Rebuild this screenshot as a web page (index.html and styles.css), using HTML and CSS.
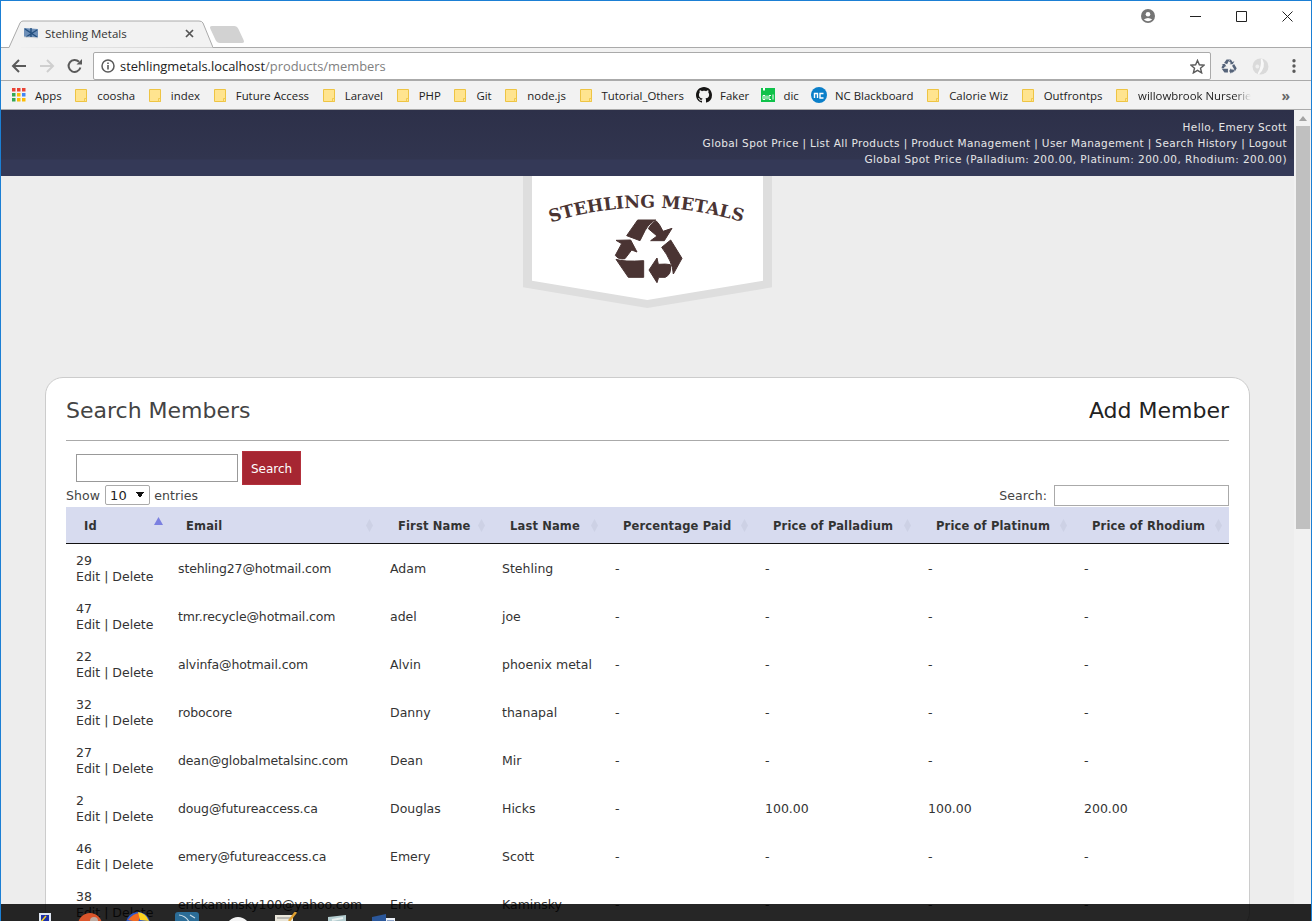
FILE: index.html
```html
<!DOCTYPE html>
<html lang="en">
<head>
    <meta charset="UTF-8">
    <title>Stehling Metals</title>
    <link rel="stylesheet" href="styles.css">
</head>
<body>
    <svg class="defs" width="0" height="0">
        <symbol id="folder" viewBox="0 0 12 13">
            <path d="M.5.5h11v12H.5z" fill="#ffe48f" stroke="#eec443"/>
            <path d="M9.5 9.500h2v3h-2z" fill="#ffe48f" stroke="#eec443" stroke-width=".8"/>
        </symbol>
        <symbol id="recycle" viewBox="310 145 210 195">
            <path d="M350 197L383 150H437Q420 156 405 182L390 212Z"/>
            <path d="M415 176Q425 157 438 152Q448 160 459 184L486 175L463 212H422L441 198Z"/>
            <path d="M482 210L516 265L490 312Q488 275 455 232Z"/>
            <path d="M441 264L417 300L441 338L446 322H466Q486 312 481 284Q470 281 445 283Z"/>
            <path d="M318 268Q342 276 401 272V322H355Z"/>
            <path d="M318 211L362 210L381 246L365 240L345 266Q325 270 316 256L335 221Z"/>
        </symbol>
    </svg>

    <div class="window">
        <!-- Barra de abas -->
        <div class="tabstrip">
            <div class="tab">
                <svg class="tab-shape" viewBox="0 0 206 28" width="206" height="28">
                    <path d="M0 28L2 27.500L13 3Q14 1 16 1H192Q195 1 196 3L206 27.500" fill="#f2f2f2" stroke="#aaa"/>
                </svg>
                <svg class="favicon" viewBox="0 0 14 12" width="14" height="12">
                    <path d="M0 1L14 2V11L0 10Z" fill="#6d8fb8"/>
                    <path d="M1 2L13 10M13 3L2 10M7 1V11" stroke="#24507f" stroke-width="1.400"/>
                    <path d="M0 10L14 11" stroke="#dcdcdc"/>
                </svg>
                <span class="tab-title">Stehling Metals</span>
                <svg class="tab-close" viewBox="0 0 9 9" width="9" height="9">
                    <path d="M1 1L8 8M8 1L1 8" stroke="#555" stroke-width="1.700"/>
                </svg>
            </div>
            <div class="newtab"></div>
            <div class="win-controls">
                <svg class="profile" viewBox="0 0 14 14" width="14" height="14">
                    <circle cx="7" cy="7" r="7" fill="#757575"/>
                    <circle cx="7" cy="5.200" r="2.300" fill="#fff"/>
                    <path d="M2.800 10.600Q7 7.400 11.200 10.600Q7 13.800 2.800 10.600Z" fill="#fff"/>
                </svg>
                <span class="win-btn"><svg viewBox="0 0 11 11" width="11" height="11"><path d="M0 5.500H11" stroke="#222"/></svg></span>
                <span class="win-btn"><svg viewBox="0 0 11 11" width="11" height="11"><path d="M.5.500h10v10H.5z" fill="none" stroke="#222"/></svg></span>
                <span class="win-btn"><svg viewBox="0 0 11 11" width="11" height="11"><path d="M.5.500L10.500 10.500M10.500.500L.5 10.500" stroke="#222"/></svg></span>
            </div>
        </div>

        <!-- Barra de endereco -->
        <div class="toolbar">
            <svg class="nav-icon" viewBox="0 0 16 16" width="16" height="16"><path d="M15 8H2M8 2L2 8L8 14" fill="none" stroke="#5a5a5a" stroke-width="2"/></svg>
            <svg class="nav-icon" viewBox="0 0 16 16" width="16" height="16"><path d="M1 8H14M8 2L14 8L8 14" fill="none" stroke="#cfcfcf" stroke-width="2"/></svg>
            <svg class="nav-icon" viewBox="0 0 16 16" width="16" height="16"><path d="M13.400 9.500A6 6 0 1 1 12 3.800" fill="none" stroke="#5a5a5a" stroke-width="2"/><path d="M9.500 6.500H15V1Z" fill="#5a5a5a"/></svg>
            <div class="omnibox">
                <svg class="info" viewBox="0 0 14 14" width="14" height="14"><circle cx="7" cy="7" r="6" fill="none" stroke="#5a5a5a" stroke-width="1.500"/><path d="M7 6V10.500M7 3.500V5" stroke="#5a5a5a" stroke-width="1.600"/></svg>
                <span class="url">stehlingmetals.localhost<span class="url-path">/products/members</span></span>
                <svg class="star" viewBox="0 0 16 16" width="15" height="15"><path d="M8 1.500L10 6.200L15 6.600L11.200 9.900L12.400 14.800L8 12.200L3.600 14.800L4.800 9.900L1 6.600L6 6.200Z" fill="none" stroke="#5a5a5a" stroke-width="1.500"/></svg>
            </div>
            <svg class="ext-recycle" width="16" height="15" fill="#56647a"><use href="#recycle"/></svg>
            <svg class="ext-ring" viewBox="0 0 16 16" width="17" height="17"><circle cx="8" cy="8" r="7.500" fill="#dadada"/><path d="M9 1Q13 8 6 15Q10 8 9 1Z" fill="#f8f8f8" stroke="#f8f8f8" stroke-width="1.500"/><circle cx="5" cy="8" r="1.800" fill="#efefef"/></svg>
            <svg class="menu-dots" viewBox="0 0 4 14" width="4" height="14"><path d="M2 0a1.700 1.700 0 1 1 0 3.400a1.700 1.700 0 1 1 0-3.400zM2 5.300a1.700 1.700 0 1 1 0 3.400a1.700 1.700 0 1 1 0-3.400zM2 10.600a1.700 1.700 0 1 1 0 3.400a1.700 1.700 0 1 1 0-3.400z" fill="#5a5a5a"/></svg>
        </div>

        <!-- Favoritos -->
        <div class="bookmarks">
            <a class="bm bm-apps">
                <svg viewBox="0 0 14 14" width="14" height="14">
                    <path d="M0 0h3.500v3.500H0z" fill="#ea4335"/><path d="M5 0h3.500v3.500H5z" fill="#ea4335"/><path d="M10 0h3.500v3.500H10z" fill="#ea4335"/>
                    <path d="M0 5h3.500v3.500H0z" fill="#34a853"/><path d="M5 5h3.500v3.500H5z" fill="#fbbc05"/><path d="M10 5h3.500v3.500H10z" fill="#4285f4"/>
                    <path d="M0 10h3.500v3.500H0z" fill="#34a853"/><path d="M5 10h3.500v3.500H5z" fill="#fbbc05"/><path d="M10 10h3.500v3.500H10z" fill="#fbbc05"/>
                </svg>Apps</a>
            <a class="bm"><svg class="bm-folder"><use href="#folder"/></svg>coosha</a>
            <a class="bm"><svg class="bm-folder"><use href="#folder"/></svg>index</a>
            <a class="bm"><svg class="bm-folder"><use href="#folder"/></svg>Future Access</a>
            <a class="bm"><svg class="bm-folder"><use href="#folder"/></svg>Laravel</a>
            <a class="bm"><svg class="bm-folder"><use href="#folder"/></svg>PHP</a>
            <a class="bm"><svg class="bm-folder"><use href="#folder"/></svg>Git</a>
            <a class="bm"><svg class="bm-folder"><use href="#folder"/></svg>node.js</a>
            <a class="bm"><svg class="bm-folder"><use href="#folder"/></svg>Tutorial_Others</a>
            <a class="bm bm-site">
                <svg viewBox="0 0 16 16" width="16" height="16"><path fill="#161514" d="M8 0C3.580 0 0 3.580 0 8c0 3.540 2.290 6.530 5.470 7.590.4.070.55-.17.55-.38 0-.19-.01-.82-.01-1.490-2.010.37-2.530-.49-2.690-.94-.09-.23-.48-.94-.82-1.130-.28-.15-.68-.52-.01-.53.63-.01 1.080.58 1.230.82.72 1.210 1.870.87 2.330.66.070-.52.28-.87.51-1.070-1.780-.2-3.640-.89-3.640-3.950 0-.87.31-1.590.82-2.150-.08-.2-.36-1.020.08-2.120 0 0 .67-.21 2.200.82.64-.18 1.320-.27 2-.27s1.360.09 2 .27c1.530-1.040 2.200-.82 2.200-.82.44 1.100.16 1.920.08 2.120.51.56.82 1.270.82 2.150 0 3.070-1.870 3.750-3.650 3.950.29.25.54.73.54 1.480 0 1.070-.01 1.930-.01 2.200 0 .21.15.46.55.38A8.010 8.010 0 0 0 16 8c0-4.420-3.580-8-8-8z"/></svg>Faker</a>
            <a class="bm bm-site">
                <svg viewBox="0 0 14 14" width="14" height="14"><path d="M0 0H14V14H0Z" fill="#0fc24a"/><path d="M2 7.500V11.500M2 7.500H4V11.500H2M6 7.500V11.500M8 7.500H10M8 7.500V11.500H10M12 6.500V11.500" fill="none" stroke="#fff"/><path d="M2 0V3L3 2L4 3V0Z" fill="#fff"/></svg>dic</a>
            <a class="bm bm-site">
                <svg viewBox="0 0 16 16" width="16" height="16"><circle cx="8" cy="8" r="8" fill="#0a7fc9"/><path d="M3.500 11V6.500H6.500V11M12.500 6.500H9V11H12.500" fill="none" stroke="#fff" stroke-width="1.400"/></svg>NC Blackboard</a>
            <a class="bm"><svg class="bm-folder"><use href="#folder"/></svg>Calorie Wiz</a>
            <a class="bm"><svg class="bm-folder"><use href="#folder"/></svg>Outfrontps</a>
            <a class="bm bm-fade"><svg class="bm-folder"><use href="#folder"/></svg><span>willowbrook Nurserie</span></a>
            <span class="bm-more">»</span>
        </div>

        <!-- Conteudo da pagina -->
        <div class="viewport">
            <div class="page">
                <header class="site-header">
                    <div>Hello, Emery Scott</div>
                    <div>Global Spot Price | List All Products | Product Management | User Management | Search History | Logout</div>
                    <div class="spot-line">Global Spot Price (Palladium: 200.00, Platinum: 200.00, Rhodium: 200.00)</div>
                </header>

                <div class="logo">
                    <svg viewBox="39 18 747 396" width="249" height="132">
                        <path d="M39 18H786V352L412 414L39 352Z" fill="#dedede"/>
                        <path d="M66 18H759V332L412 390L66 332Z" fill="#fff"/>
                        <path id="logo-arc" d="M122 158Q412 66 708 160" fill="none"/>
                        <text class="logo-text"><textPath href="#logo-arc">STEHLING METALS</textPath></text>
                        <use class="logo-mark" href="#recycle" x="310" y="145" width="210" height="195"/>
                    </svg>
                </div>

                <main class="card">
                    <div class="card-head">
                        <h2>Search Members</h2>
                        <a class="add-link">Add Member</a>
                    </div>
                    <form class="search-form">
                        <input type="text" class="search-input">
                        <button type="button" class="search-btn">Search</button>
                    </form>
                    <div class="table-tools">
                        <label class="show">Show
                            <select class="show-select"><option>10</option></select>
                            entries</label>
                        <label class="filter">Search: <input type="text" class="filter-input"></label>
                    </div>
                    <table class="members">
                        <colgroup>
                            <col class="c-id"><col class="c-email"><col class="c-first"><col class="c-last">
                            <col class="c-pct"><col class="c-pal"><col class="c-pla"><col class="c-rho">
                        </colgroup>
                        <thead>
                            <tr>
                                <th class="sorted">Id</th>
                                <th>Email</th>
                                <th>First Name</th>
                                <th>Last Name</th>
                                <th>Percentage Paid</th>
                                <th>Price of Palladium</th>
                                <th>Price of Platinum</th>
                                <th>Price of Rhodium</th>
                            </tr>
                        </thead>
                        <tbody>
                            <tr><td>29<br>Edit | Delete</td><td>stehling27@hotmail.com</td><td>Adam</td><td>Stehling</td><td>-</td><td>-</td><td>-</td><td>-</td></tr>
                            <tr><td>47<br>Edit | Delete</td><td>tmr.recycle@hotmail.com</td><td>adel</td><td>joe</td><td>-</td><td>-</td><td>-</td><td>-</td></tr>
                            <tr><td>22<br>Edit | Delete</td><td>alvinfa@hotmail.com</td><td>Alvin</td><td>phoenix metal</td><td>-</td><td>-</td><td>-</td><td>-</td></tr>
                            <tr><td>32<br>Edit | Delete</td><td>robocore</td><td>Danny</td><td>thanapal</td><td>-</td><td>-</td><td>-</td><td>-</td></tr>
                            <tr><td>27<br>Edit | Delete</td><td>dean@globalmetalsinc.com</td><td>Dean</td><td>Mir</td><td>-</td><td>-</td><td>-</td><td>-</td></tr>
                            <tr><td>2<br>Edit | Delete</td><td>doug@futureaccess.ca</td><td>Douglas</td><td>Hicks</td><td>-</td><td>100.00</td><td>100.00</td><td>200.00</td></tr>
                            <tr><td>46<br>Edit | Delete</td><td>emery@futureaccess.ca</td><td>Emery</td><td>Scott</td><td>-</td><td>-</td><td>-</td><td>-</td></tr>
                            <tr><td>38<br>Edit | Delete</td><td>erickaminsky100@yahoo.com</td><td>Eric</td><td>Kaminsky</td><td>-</td><td>-</td><td>-</td><td>-</td></tr>
                        </tbody>
                    </table>
                </main>
            </div>
            <div class="scrollbar">
                <span class="scroll-up"></span>
                <span class="scroll-thumb"></span>
            </div>
        </div>

        <!-- Barra de tarefas por cima da pagina -->
        <div class="taskbar">
            <svg class="task-icon ti-1" viewBox="0 0 16 16" width="16" height="16"><path d="M2 0H14V10H2Z" fill="#dfe6f2"/><path d="M4 2H12V9H4Z" fill="#1c2fa8"/><path d="M4 9L9 3" stroke="#f5d020" stroke-width="1.500"/></svg>
            <svg class="task-icon ti-2" viewBox="0 0 24 24" width="24" height="24"><circle cx="12" cy="12" r="12" fill="#d9552b"/><circle cx="16" cy="8" r="4" fill="#b9a9a0"/></svg>
            <svg class="task-icon ti-3" viewBox="0 0 24 24" width="24" height="24"><circle cx="12" cy="12" r="12" fill="#2b58c9"/><path d="M2 8Q8 0 16 1L12 10Z" fill="#f06a20"/><path d="M12 0Q20 1 23 9L14 8Z" fill="#fcd21e"/></svg>
            <svg class="task-icon ti-4" viewBox="0 0 24 24" width="24" height="24"><rect width="24" height="24" rx="3" fill="#2b6c96"/><path d="M4 3Q12 4 15 12M15 3L20 6" fill="none" stroke="#c9dbe6" stroke-width="1.200"/></svg>
            <svg class="task-icon ti-5" viewBox="0 0 24 24" width="24" height="24"><circle cx="12" cy="12" r="12" fill="#f4f4f4"/><circle cx="8" cy="7" r="2" fill="#222"/><circle cx="16" cy="7" r="2" fill="#222"/></svg>
            <svg class="task-icon ti-6" viewBox="0 0 24 24" width="24" height="24"><path d="M1 3H19V24H1Z" fill="#e9e6da"/><path d="M3 6H17" stroke="#8a8a8a"/><path d="M15 9L22 0" stroke="#e0a030" stroke-width="2.500"/></svg>
            <svg class="task-icon ti-7" viewBox="0 0 24 24" width="24" height="24"><path d="M4 3L22 1V22L4 24Z" fill="#b4cdd0"/><path d="M8 6L19 4" stroke="#e8f0f0" stroke-width="2"/></svg>
            <svg class="task-icon ti-8" viewBox="0 0 24 24" width="24" height="24"><path d="M0 4L14 1V24H0Z" fill="#2b579a"/><path d="M14 5H23V24H14Z" fill="#e9eef6"/><path d="M15 8H22" stroke="#2b579a"/></svg>
        </div>
    </div>
</body>
</html>
```

FILE: styles.css
```css
* {
    box-sizing: border-box;
}
html, body {
    margin: 0;
    padding: 0;
    height: 100%;
    overflow: hidden;
}
body {
    font-family: "DejaVu Sans", Verdana, sans-serif;
    font-size: 13px;
    color: #333;
    background-color: #fff;
}
.defs {
    position: absolute;
}
.window {
    position: relative;
    display: flex;
    flex-direction: column;
    height: 921px;
    border-top: 1px solid #1b7fd4;
    border-left: 1px solid #1b7fd4;
    border-right: 1px solid #1b7fd4;
    overflow: hidden;
}

/* abas */
.tabstrip {
    display: flex;
    align-items: flex-end;
    height: 47px;
    padding-left: 6px;
    border-bottom: 1px solid #aaa;
    flex-shrink: 0;
}
.tab {
    position: relative;
    display: flex;
    align-items: center;
    width: 206px;
    height: 28px;
    margin-bottom: -1px;
    padding: 0 19px 2px 17px;
    font-family: "Open Sans", sans-serif;
    font-size: 11.500px;
    color: #333;
}
.tab-shape {
    position: absolute;
    left: 0;
    top: 0;
}
.favicon, .tab-title, .tab-close {
    position: relative;
}
.tab-title {
    margin-left: 7px;
    flex: 1;
}
.newtab {
    width: 28px;
    height: 17px;
    margin: 0 0 4px 0;
    background-color: #d2d2d2;
    border-radius: 3px;
    transform: skewX(25deg);
}
.win-controls {
    display: flex;
    align-items: center;
    margin-left: auto;
    align-self: flex-start;
    height: 30px;
    padding-right: 1px;
}
.profile {
    margin-right: 17px;
}
.win-btn {
    display: flex;
    justify-content: center;
    align-items: center;
    width: 46px;
    height: 30px;
}

/* barra de endereco */
.toolbar {
    display: flex;
    align-items: center;
    height: 32px;
    padding: 4px 0 0 10px;
    background-color: #f2f2f2;
    flex-shrink: 0;
}
.nav-icon {
    margin-right: 12px;
}
.nav-icon:nth-child(3) {
    margin-right: 10px;
}
.omnibox {
    display: flex;
    align-items: center;
    width: 1118px;
    height: 28px;
    padding: 0 5px 0 7px;
    background-color: #fff;
    border: 1px solid #aaa;
    border-radius: 2px;
    font-family: "Open Sans", sans-serif;
    font-size: 12.900px;
}
.url {
    margin-left: 5px;
    flex: 1;
    color: #222;
}
.url-path {
    color: #808080;
}
.ext-recycle {
    margin-left: 10px;
}
.ext-ring {
    margin-left: 15px;
}
.menu-dots {
    margin-left: 23px;
}

/* favoritos */
.bookmarks {
    display: flex;
    align-items: center;
    gap: 13.700px;
    height: 30px;
    padding: 0 0 0 11px;
    background-color: #f2f2f2;
    border-top: 1px solid #aaa;
    border-bottom: 1px solid #aaa;
    font-family: "Open Sans", sans-serif;
    font-size: 11.400px;
    color: #222;
    flex-shrink: 0;
}
.bm {
    display: flex;
    align-items: center;
    gap: 8px;
    white-space: nowrap;
}
.bm-apps {
    gap: 9px;
}
.bm-site {
    margin-left: -1.500px;
}
.bm-folder {
    width: 12px;
    height: 13px;
    margin-right: 2px;
}
.bm-fade span {
    display: block;
    -webkit-mask-image: linear-gradient(to right, #000 85%, transparent);
    mask-image: linear-gradient(to right, #000 85%, transparent);
}
.bm-more {
    margin-left: auto;
    padding-right: 21px;
    font-weight: bold;
    font-size: 14px;
    color: #666;
}

/* pagina */
.viewport {
    display: flex;
    flex: 1;
    min-height: 0;
}
.page {
    width: 1293px;
    background-color: #ededed;
    overflow: hidden;
}
.site-header {
    height: 66px;
    padding: 9px 7px 0 0;
    background: linear-gradient(to bottom, #2d3049 0, #31354f 49px, #343957 50px, #343957 100%);
    color: #e6e6e6;
    font-size: 10.500px;
    line-height: 16px;
    text-align: right;
    letter-spacing: .38px;
}
.spot-line {
    letter-spacing: .46px;
}
.logo {
    display: flex;
    justify-content: center;
    height: 201px;
}
.logo svg {
    display: block;
}
.logo-text {
    font-family: "DejaVu Serif", serif;
    font-weight: bold;
    font-size: 52px;
    fill: #4a3433;
}
.logo-mark {
    fill: #4a3433;
    stroke: #4a3433;
    stroke-width: 3;
}
.card {
    margin: 0 44px 0 44px;
    padding: 10px 20px 0;
    background-color: #fff;
    border: 1px solid #ccc;
    border-radius: 18px;
}
.card-head {
    display: flex;
    justify-content: space-between;
    align-items: center;
    height: 53px;
    padding-bottom: 8px;
    border-bottom: 1px solid #aaa;
}
.card-head h2 {
    margin: 0;
    font-size: 22px;
    font-weight: normal;
    color: #444;
}
.add-link {
    font-size: 22px;
    color: #222;
}
.search-form {
    display: flex;
    align-items: center;
    gap: 4px;
    padding: 10px 0 0 10px;
}
.search-input {
    width: 162px;
    height: 28px;
    border: 1px solid #999;
    background-color: #fff;
}
.search-btn {
    width: 59px;
    height: 34px;
    padding: 1px 0 0;
    background-color: #a62632;
    border: 1px solid #b3303c;
    color: #fff;
    font-family: "DejaVu Sans", sans-serif;
    font-size: 12px;
}
.table-tools {
    display: flex;
    justify-content: space-between;
    align-items: flex-start;
    height: 22px;
    font-size: 12.500px;
    letter-spacing: .08px;
    color: #444;
}
.show-select {
    appearance: none;
    -webkit-appearance: none;
    width: 45px;
    height: 20px;
    margin: 0 0 0 1px;
    padding: 0 0 0 4px;
    background-color: #fff;
    background-image: linear-gradient(to top right, transparent 50%, #111 50%), linear-gradient(to top left, transparent 50%, #111 50%);
    background-size: 4px 6px;
    background-position: 30px 6px, 34px 6px;
    background-repeat: no-repeat;
    border: 1px solid #aaa;
    border-radius: 2px;
    font-family: "DejaVu Sans", sans-serif;
    font-size: 13px;
    color: #222;
}
.filter-input {
    width: 175px;
    height: 21px;
    margin-left: 3px;
    border: 1px solid #aaa;
    background-color: #fff;
}
.members {
    width: 100%;
    table-layout: fixed;
    border-collapse: collapse;
}
.c-id { width: 102px; }
.c-email { width: 212px; }
.c-first { width: 112px; }
.c-last { width: 113px; }
.c-pct { width: 150px; }
.c-pal { width: 163px; }
.c-pla { width: 156px; }
.c-rho { width: 155px; }
.members th {
    position: relative;
    height: 36px;
    padding: 3px 18px 0;
    background-color: #d7dbef;
    border-bottom: 1px solid #111;
    font-size: 11.500px;
    letter-spacing: .15px;
    color: #333;
    text-align: left;
    white-space: nowrap;
}
.members th::after {
    content: "";
    position: absolute;
    right: 7px;
    top: 12px;
    width: 7px;
    height: 13px;
    background-color: #cdd1e5;
    clip-path: polygon(50% 0, 100% 50%, 50% 100%, 0 50%);
}
.members th.sorted::after {
    top: 10px;
    right: 5px;
    width: 9px;
    height: 8px;
    background-color: #7b80e0;
    clip-path: polygon(50% 0, 100% 100%, 0 100%);
}
.members td {
    padding: 8px 10px;
    line-height: 16px;
    font-size: 12.500px;
    color: #333;
    white-space: nowrap;
    vertical-align: middle;
}
.members tbody tr:first-child td {
    padding-top: 9px;
}
.members td:nth-child(2) {
    letter-spacing: -.13px;
}

/* barra de rolagem */
.scrollbar {
    position: relative;
    width: 17px;
    background-color: #f1f1f1;
    padding-left: 1px;
}
.scroll-up {
    display: block;
    width: 0;
    margin: 6px auto 5px;
    border-left: 4px solid transparent;
    border-right: 4px solid transparent;
    border-bottom: 5px solid #a3a3a3;
}
.scroll-thumb {
    display: block;
    width: 14px;
    height: 403px;
    margin: 0 auto;
    background-color: #c0c0c0;
}

/* barra de tarefas */
.taskbar {
    position: absolute;
    left: -1px;
    right: -1px;
    bottom: 0;
    height: 17px;
    display: block;
    background-color: rgba(0, 0, 0, .85);
    overflow: hidden;
}
.task-icon {
    position: absolute;
    top: 8px;
}
.ti-1 { left: 37px; top: 9px; }
.ti-2 { left: 78px; top: 9px; }
.ti-3 { left: 126px; }
.ti-4 { left: 175px; }
.ti-5 { left: 226px; top: 13px; }
.ti-6 { left: 274px; }
.ti-7 { left: 324px; top: 10px; }
.ti-8 { left: 372px; top: 9px; }
```
